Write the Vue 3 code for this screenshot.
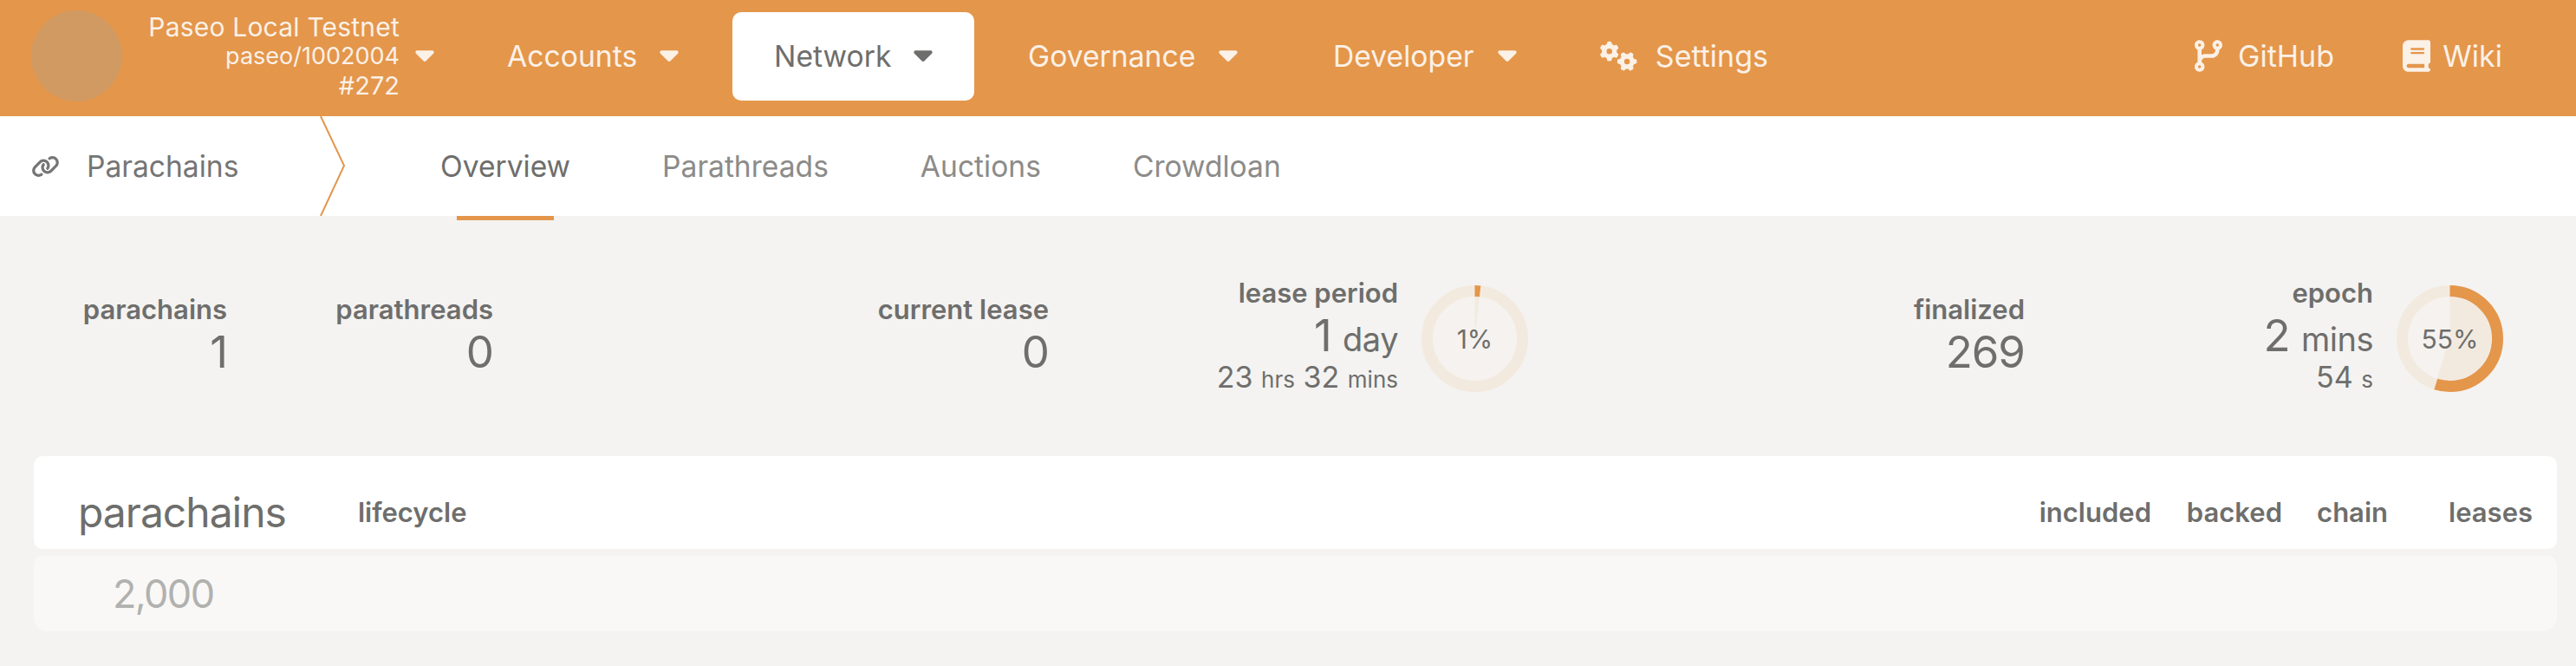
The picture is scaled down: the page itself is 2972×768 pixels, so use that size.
<script setup>
const navItems = [
  { label: 'Accounts', cls: 'n-accounts' },
  { label: 'Network', cls: 'n-network', active: true },
  { label: 'Governance', cls: 'n-gov' },
  { label: 'Developer', cls: 'n-dev' }
]
const tabs = [
  { label: 'Overview', active: true },
  { label: 'Parathreads' },
  { label: 'Auctions' },
  { label: 'Crowdloan' }
]
const caret = 'M137.4 374.6c12.5 12.5 32.8 12.5 45.3 0l128-128c9.2-9.2 11.9-22.9 6.9-34.9s-16.6-19.8-29.6-19.8L32 192c-12.9 0-24.6 7.8-29.6 19.8s-2.2 25.7 6.9 34.9l128 128z'
const R = 55
const C = 2 * Math.PI * R
const PIE_R = 24
const PIE_C = 2 * Math.PI * PIE_R
const dash = (p) => `${(C * p) / 100} ${C}`
const pie = (p) => `${(PIE_C * p) / 100} ${PIE_C}`
</script>

<template>
  <div class="page">
    <header class="topbar">
      <div class="logo"></div>
      <div class="chain">
        <div class="chain-name">Paseo Local Testnet</div>
        <div>paseo/1002004</div>
        <div class="chain-block">#272</div>
      </div>
      <svg class="caret chain-caret" viewBox="0 190 320 195"><path :d="caret" /></svg>
      <div
        v-for="item in navItems"
        :key="item.label"
        class="nav-item"
        :class="[item.cls, { active: item.active }]"
      >
        <span>{{ item.label }}</span>
        <svg class="caret" viewBox="0 190 320 195"><path :d="caret" /></svg>
      </div>
      <div class="nav-link settings">
        <svg class="gears" viewBox="0 0 640 512"><path d="M308.5 135.3c7.1-6.3 9.9-16.2 6.2-25c-2.3-5.3-4.8-10.5-7.6-15.5L304 89.4c-3-5-6.3-9.9-9.8-14.6c-5.7-7.6-15.7-10.1-24.7-7.1l-28.2 9.3c-10.7-8.8-23-16-36.2-20.9L199 27.1c-1.9-9.3-9.1-16.7-18.5-17.8C173.9 8.4 167.2 8 160.4 8h-.7c-6.8 0-13.5 .4-20.1 1.2c-9.4 1.1-16.6 8.6-18.5 17.8L115 56.1c-13.3 5-25.5 12.1-36.2 20.9L50.5 67.8c-9-3-19-.5-24.7 7.1c-3.5 4.7-6.8 9.6-9.9 14.6l-3 5.3c-2.8 5-5.3 10.2-7.6 15.6c-3.7 8.7-.9 18.6 6.2 25l22.2 19.8C32.6 161.9 32 168.9 32 176s.6 14.1 1.7 20.9L11.5 216.7c-7.1 6.3-9.9 16.2-6.2 25c2.3 5.3 4.8 10.5 7.6 15.6l3 5.2c3 5.1 6.3 9.9 9.9 14.6c5.7 7.6 15.7 10.1 24.7 7.1l28.2-9.3c10.7 8.8 23 16 36.2 20.9l6.1 29.1c1.9 9.3 9.1 16.7 18.5 17.8c6.7 .8 13.5 1.2 20.4 1.2s13.7-.4 20.4-1.2c9.4-1.1 16.6-8.6 18.5-17.8l6.1-29.1c13.3-5 25.5-12.1 36.2-20.9l28.2 9.3c9 3 19 .5 24.7-7.1c3.5-4.7 6.8-9.5 9.8-14.6l3.1-5.4c2.8-5 5.3-10.2 7.6-15.5c3.7-8.7 .9-18.6-6.2-25l-22.2-19.8c1.1-6.8 1.7-13.8 1.7-20.9s-.6-14.1-1.7-20.9l22.2-19.8zM112 176a48 48 0 1 1 96 0 48 48 0 1 1 -96 0zM504.7 500.5c6.3 7.1 16.2 9.9 25 6.2c5.3-2.3 10.5-4.8 15.5-7.6l5.4-3.1c5-3 9.9-6.3 14.6-9.8c7.6-5.7 10.1-15.7 7.1-24.7l-9.3-28.2c8.8-10.7 16-23 20.9-36.2l29.1-6.1c9.3-1.9 16.7-9.1 17.8-18.5c.8-6.7 1.2-13.5 1.2-20.4s-.4-13.7-1.2-20.4c-1.1-9.4-8.6-16.6-17.8-18.5L583.9 307c-5-13.3-12.1-25.5-20.9-36.2l9.3-28.2c3-9 .5-19-7.1-24.7c-4.7-3.5-9.6-6.8-14.6-9.9l-5.3-3c-5-2.8-10.2-5.3-15.6-7.6c-8.7-3.7-18.6-.9-25 6.2l-19.8 22.2c-6.8-1.1-13.8-1.7-20.9-1.7s-14.1 .6-20.9 1.7l-19.8-22.2c-6.3-7.1-16.2-9.9-25-6.2c-5.3 2.3-10.5 4.8-15.6 7.6l-5.2 3c-5.1 3-9.9 6.3-14.6 9.9c-7.6 5.7-10.1 15.7-7.1 24.7l9.3 28.2c-8.8 10.7-16 23-20.9 36.2L315.1 313c-9.3 1.9-16.7 9.1-17.8 18.5c-.8 6.7-1.2 13.5-1.2 20.4s.4 13.7 1.2 20.4c1.1 9.4 8.6 16.6 17.8 18.5l29.1 6.1c5 13.3 12.1 25.5 20.9 36.2l-9.3 28.2c-3 9-.5 19 7.1 24.7c4.7 3.5 9.5 6.8 14.6 9.8l5.4 3.1c5 2.8 10.2 5.3 15.5 7.6c8.7 3.7 18.6 .9 25-6.2l19.8-22.2c6.8 1.1 13.8 1.7 20.9 1.7s14.1-.6 20.9-1.7l19.8 22.2zM464 304a48 48 0 1 1 0 96 48 48 0 1 1 0-96z" /></svg>
        <span>Settings</span>
      </div>
      <div class="nav-link github">
        <svg class="branch" viewBox="0 0 448 512"><path d="M80 104a24 24 0 1 0 0-48 24 24 0 1 0 0 48zm80-24c0 32.8-19.7 61-48 73.3v87.8c18.8-10.9 40.7-17.1 64-17.1h96c35.3 0 64-28.7 64-64v-6.7C307.7 141 288 112.8 288 80c0-44.2 35.8-80 80-80s80 35.8 80 80c0 32.8-19.7 61-48 73.3V160c0 70.7-57.3 128-128 128H176c-35.3 0-64 28.7-64 64v6.7c28.3 12.3 48 40.5 48 73.3c0 44.2-35.8 80-80 80s-80-35.8-80-80c0-32.8 19.7-61 48-73.3V352 153.3C19.7 141 0 112.8 0 80C0 35.8 35.8 0 80 0s80 35.8 80 80zm232 0a24 24 0 1 0 -48 0 24 24 0 1 0 48 0zM80 456a24 24 0 1 0 0-48 24 24 0 1 0 0 48z" /></svg>
        <span>GitHub</span>
      </div>
      <div class="nav-link wiki">
        <svg class="book" viewBox="0 0 448 512"><path d="M96 0C43 0 0 43 0 96V416c0 53 43 96 96 96H384h32c17.7 0 32-14.3 32-32s-14.3-32-32-32V384c17.7 0 32-14.3 32-32V32c0-17.7-14.3-32-32-32H384 96zm0 384H352v64H96c-17.7 0-32-14.3-32-32s14.3-32 32-32zm32-240c0-8.8 7.2-16 16-16H336c8.8 0 16 7.2 16 16s-7.2 16-16 16H144c-8.8 0-16-7.2-16-16zm16 48H336c8.8 0 16 7.2 16 16s-7.2 16-16 16H144c-8.8 0-16-7.2-16-16s7.2-16 16-16z" /></svg>
        <span>Wiki</span>
      </div>
    </header>

    <nav class="tabbar">
      <div class="section">
        <svg class="link" viewBox="0 0 640 512"><path d="M579.8 267.7c56.5-56.5 56.5-148 0-204.5c-50-50-128.8-56.5-186.3-15.4l-1.6 1.1c-14.4 10.3-17.7 30.3-7.4 44.6s30.3 17.7 44.6 7.4l1.6-1.1c32.1-22.9 76-19.3 103.8 8.6c31.5 31.5 31.5 82.5 0 114L422.3 334.8c-31.5 31.5-82.5 31.5-114 0c-27.9-27.9-31.5-71.8-8.6-103.8l1.1-1.6c10.3-14.4 6.9-34.4-7.4-44.6s-34.4-6.9-44.6 7.4l-1.1 1.6C206.5 251.2 213 330 263 380c56.5 56.5 148 56.5 204.5 0L579.8 267.7zM60.2 244.3c-56.5 56.5-56.5 148 0 204.5c50 50 128.8 56.5 186.3 15.4l1.6-1.1c14.4-10.3 17.7-30.3 7.4-44.6s-30.3-17.7-44.6-7.4l-1.6 1.1c-32.1 22.9-76 19.3-103.8-8.6C74 372 74 321 105.5 289.5L217.7 177.2c31.5-31.5 82.5-31.5 114 0c27.9 27.9 31.5 71.8 8.6 103.9l-1.1 1.6c-10.3 14.4-6.9 34.4 7.4 44.6s34.4 6.9 44.6-7.4l1.1-1.6C433.5 260.8 427 182 377 132c-56.5-56.5-148-56.5-204.5 0L60.2 244.3z" /></svg>
        <span>Parachains</span>
        <svg class="chevron" viewBox="0 0 30 115" preserveAspectRatio="none"><path d="M1 0 L28 57 L1 115" /></svg>
      </div>
      <div v-for="tab in tabs" :key="tab.label" class="tab" :class="{ active: tab.active }">{{ tab.label }}</div>
    </nav>

    <main class="content">
      <section class="stats">
        <div class="stat w1 two"><div class="label">parachains</div><div class="value">1</div></div>
        <div class="stat w2 two"><div class="label">parathreads</div><div class="value">0</div></div>
        <div class="stat w3 two"><div class="label">current lease</div><div class="value">0</div></div>
        <div class="stat w4 three">
          <div class="label">lease period</div>
          <div class="value">1 <span class="unit">day</span></div>
          <div class="sub">23 <span class="sub-unit">hrs</span> 32 <span class="sub-unit">mins</span></div>
        </div>
        <div class="donut">
          <svg viewBox="0 0 123 123">
            <circle class="inner" cx="61.5" cy="61.5" r="49" />
            <circle class="wedge" cx="61.5" cy="61.5" :r="PIE_R" :stroke-dasharray="pie(1.8)" transform="rotate(-90 61.5 61.5)" />
            <circle class="track" cx="61.5" cy="61.5" :r="R" />
            <circle class="bar" cx="61.5" cy="61.5" :r="R" :stroke-dasharray="dash(1.8)" transform="rotate(-90 61.5 61.5)" />
          </svg>
          <span>1%</span>
        </div>
        <div class="stat w5 two"><div class="label">finalized</div><div class="value">269</div></div>
        <div class="stat w6 three">
          <div class="label">epoch</div>
          <div class="value">2 <span class="unit">mins</span></div>
          <div class="sub">54 <span class="sub-unit">s</span></div>
        </div>
        <div class="donut">
          <svg viewBox="0 0 123 123">
            <circle class="inner" cx="61.5" cy="61.5" r="49" />
            <circle class="wedge" cx="61.5" cy="61.5" :r="PIE_R" :stroke-dasharray="pie(54.7)" transform="rotate(-90 61.5 61.5)" />
            <circle class="track" cx="61.5" cy="61.5" :r="R" />
            <circle class="bar" cx="61.5" cy="61.5" :r="R" :stroke-dasharray="dash(54.7)" transform="rotate(-90 61.5 61.5)" />
          </svg>
          <span>55%</span>
        </div>
      </section>

      <section class="table">
        <div class="thead">
          <div class="title">parachains</div>
          <div class="th grow">lifecycle</div>
          <div class="th c-included">included</div>
          <div class="th c-backed">backed</div>
          <div class="th c-chain">chain</div>
          <div class="th c-leases">leases</div>
        </div>
        <div class="row"><span class="para-id">2,000</span></div>
      </section>
    </main>
  </div>
</template>

<style>
html, body { margin: 0; background: #f4f3f1; }
</style>

<style scoped>
.page {
  width: 2972px;
  height: 768px;
  overflow: hidden;
  background: #f4f3f1;
  font-family: Inter, "Liberation Sans", sans-serif;
  color: #6e6e6c;
}
.topbar {
  height: 134px;
  box-sizing: border-box;
  padding-bottom: 5px;
  background: #e4964b;
  color: #fbf1e7;
  display: flex;
  align-items: center;
  font-size: 33.7px;
}
.logo {
  width: 105px;
  height: 105px;
  border-radius: 50%;
  background: #d19a62;
  margin-left: 36px;
  flex: none;
}
.chain {
  width: 290px;
  margin-left: 30px;
  text-align: right;
  font-size: 27px;
  line-height: 34px;
  flex: none;
}
.chain-name { font-size: 30px; letter-spacing: 0.2px; white-space: nowrap; }
.chain-block { font-size: 29px; }
.caret {
  width: 22px;
  height: 13px;
  fill: currentColor;
  flex: none;
}
.chain-caret { margin-left: 18px; }
.nav-item {
  display: flex;
  align-items: center;
  justify-content: space-between;
  flex: none;
  box-sizing: border-box;
}
.n-accounts { margin-left: 84px; width: 198px; }
.n-network {
  margin-left: 62px;
  width: 279px;
  height: 102px;
  padding: 0 48px;
  background: #fff;
  border-radius: 10px;
  color: #6e6e6c;
}
.n-gov { margin-left: 62px; width: 242px; }
.n-dev { margin-left: 110px; width: 212px; }
.nav-link {
  display: flex;
  align-items: center;
  justify-content: space-between;
  flex: none;
}
.settings { margin-left: 96px; width: 194px; font-size: 34px; }
.github { margin-left: 492px; width: 161px; font-size: 34px; }
.wiki { margin-left: 79px; width: 115px; font-size: 34px; }
.gears { width: 43px; height: 35px; fill: currentColor; }
.branch { width: 32px; height: 37px; fill: currentColor; }
.book { width: 32px; height: 37px; fill: currentColor; }

.tabbar {
  height: 115px;
  background: #fff;
  display: flex;
  align-items: center;
  font-size: 33.6px;
}
.section {
  width: 508px;
  height: 115px;
  display: flex;
  align-items: center;
  flex: none;
  color: #757575;
  box-sizing: border-box;
  padding-left: 36px;
  position: relative;
}
.link { width: 33px; height: 26px; fill: currentColor; margin-right: 31px; }
.chevron {
  position: absolute;
  left: 369px;
  top: 0;
  width: 30px;
  height: 115px;
  fill: none;
  stroke: #e4964b;
  stroke-width: 2;
}
.tab {
  height: 115px;
  line-height: 115px;
  color: #8c8b89;
  margin-right: 106px;
  position: relative;
  flex: none;
}
.tab.active { color: #6e6e6c; }
.tab.active::after {
  content: "";
  position: absolute;
  left: 19px;
  right: 19px;
  bottom: -5px;
  height: 5px;
  background: #e4964b;
}

.stats {
  height: 271px;
  padding-top: 6px;
  display: flex;
  align-items: center;
}
.stat { text-align: right; flex: none; white-space: nowrap; box-sizing: border-box; }
.two { padding-bottom: 12px; }
.three { padding-bottom: 6px; }
.w1 { width: 262px; }
.w2 { width: 307px; }
.w3 { width: 641px; }
.w4 { width: 403px; }
.w5 { width: 573px; }
.w6 { width: 402px; }
.label { font-size: 31px; font-weight: 600; line-height: 38px; }
.value { font-size: 51px; letter-spacing: -1px; line-height: 52px; margin-top: 4px; }
.unit { font-size: 38px; letter-spacing: -0.5px; }
.sub { font-size: 34px; line-height: 36px; }
.sub-unit { font-size: 26px; }
.donut {
  width: 123px;
  height: 123px;
  margin-left: 27px;
  flex: none;
  display: grid;
  place-items: center;
  font-size: 30px;
}
.donut > * { grid-area: 1 / 1; }
.donut svg { width: 123px; height: 123px; display: block; }
.inner { fill: #f5f2ef; }
.wedge { fill: none; stroke: #f3eadf; stroke-width: 48; }
.track { fill: none; stroke: #f3eadf; stroke-width: 13; }
.bar { fill: none; stroke: #e4964b; stroke-width: 13; }

.table { margin: 0 22px 0 39px; }
.thead {
  height: 107px;
  background: #fff;
  border-radius: 10px;
  display: flex;
  align-items: center;
  box-sizing: border-box;
  padding: 22px 28px 0 51px;
}
.title { width: 323px; font-size: 48px; letter-spacing: -1px; flex: none; }
.th { font-size: 31px; font-weight: 600; text-align: right; flex: none; }
.grow { flex: 1; text-align: left; }
.c-included { width: 150px; }
.c-backed { width: 151px; }
.c-chain { width: 122px; }
.c-leases { width: 167px; }
.row {
  height: 87px;
  margin-top: 8px;
  background: #f9f8f6;
  border-radius: 10px 10px 16px 16px;
  display: flex;
  align-items: center;
  padding-left: 91px;
}
.para-id { font-size: 45px; letter-spacing: -1.6px; color: #b1b1af; }
</style>
